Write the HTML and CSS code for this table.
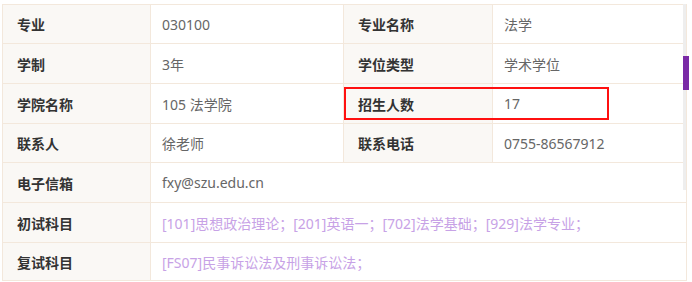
FILE: index.html
```html
<!DOCTYPE html>
<html lang="zh-CN">
<head>
<meta charset="utf-8">
<title>专业信息</title>
<link rel="stylesheet" href="styles.css">
</head>
<body>
<div class="wrap">
  <div class="info">
    <div class="cell label">专业</div>
    <div class="cell value">030100</div>
    <div class="cell label">专业名称</div>
    <div class="cell value">法学</div>

    <div class="cell label">学制</div>
    <div class="cell value">3年</div>
    <div class="cell label">学位类型</div>
    <div class="cell value">学术学位</div>

    <div class="cell label">学院名称</div>
    <div class="cell value">105 法学院</div>
    <div class="cell label">招生人数</div>
    <div class="cell value">17</div>

    <div class="cell label">联系人</div>
    <div class="cell value">徐老师</div>
    <div class="cell label">联系电话</div>
    <div class="cell value">0755-86567912</div>

    <div class="cell label">电子信箱</div>
    <div class="cell value wide">fxy@szu.edu.cn</div>

    <div class="cell label">初试科目</div>
    <div class="cell value wide link">[101]思想政治理论；[201]英语一；[702]法学基础；[929]法学专业；</div>

    <div class="cell label">复试科目</div>
    <div class="cell value wide link">[FS07]民事诉讼法及刑事诉讼法；</div>
  </div>
  <div class="highlight"></div>
  <div class="track"></div>
  <div class="thumb"></div>
</div>
</body>
</html>
```
FILE: styles.css
```css
html, body {
  margin: 0;
  padding: 0;
  background: #ffffff;
}

body {
  font-family: "Noto Sans", "Noto Sans CJK SC", sans-serif;
  font-size: 14px;
}

.wrap {
  position: relative;
  padding: 4px 0 0 2px;
}

.info {
  display: grid;
  grid-template-columns: 148px 193px 149px 194px;
  grid-template-rows: 39px 40px 40px 39px 40px 40px 38px;
  width: 684px;
  border-top: 1px solid #f3e8dc;
  border-left: 1px solid #f3e8dc;
}

.cell {
  display: flex;
  align-items: center;
  border-right: 1px solid #f3e8dc;
  border-bottom: 1px solid #f3e8dc;
  white-space: nowrap;
  overflow: hidden;
}

.label {
  background: #faf8f5;
  color: #333333;
  font-weight: bold;
  padding-left: 14px;
}

.value {
  background: #ffffff;
  color: #666666;
  padding-left: 11px;
}

.wide {
  grid-column: 2 / 5;
}

.link {
  color: #c7a2e6;
}

.highlight {
  position: absolute;
  left: 344px;
  top: 87px;
  width: 261px;
  height: 29px;
  border: 2px solid #ff1010;
}

.track {
  position: absolute;
  left: 683px;
  top: 4px;
  width: 3px;
  height: 186px;
  background: #eeeeee;
}

.thumb {
  position: absolute;
  left: 683px;
  top: 56px;
  width: 6px;
  height: 34px;
  background: #7a2aa6;
}
```
